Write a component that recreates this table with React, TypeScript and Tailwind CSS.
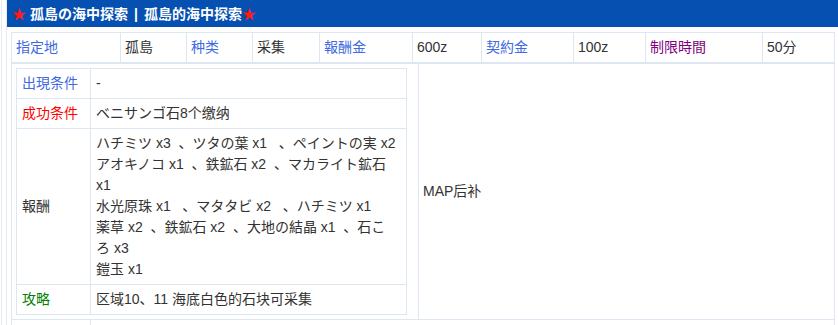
import React from 'react'

const topCells = [
  { label: '指定地', w: 'w-[109px]', tone: 'text-[#4169e1]' },
  { label: '孤島', w: 'w-[66px]', tone: 'text-[#333333]' },
  { label: '种类', w: 'w-[66px]', tone: 'text-[#4169e1]' },
  { label: '采集', w: 'w-[67px]', tone: 'text-[#333333]' },
  { label: '報酬金', w: 'w-[93px]', tone: 'text-[#4169e1]' },
  { label: '600z', w: 'w-[69px]', tone: 'text-[#333333]' },
  { label: '契約金', w: 'w-[92px]', tone: 'text-[#4169e1]' },
  { label: '100z', w: 'w-[72px]', tone: 'text-[#333333]' },
  { label: '制限時間', w: 'w-[117px]', tone: 'text-[#800080]' },
  { label: '50分', w: 'flex-1', tone: 'text-[#333333]' },
]

const rewardLines = [
  'ハチミツ x3  、ツタの葉 x1   、ペイントの実 x2',
  'アオキノコ x1  、鉄鉱石 x2  、マカライト鉱石',
  'x1',
  '水光原珠 x1   、マタタビ x2   、ハチミツ x1',
  '薬草 x2  、鉄鉱石 x2  、大地の結晶 x1  、石こ',
  'ろ x3',
  '鎧玉 x1',
]

const InfoRow = ({
  label,
  tone,
  h,
  children,
}: {
  label: string
  tone: string
  h: string
  children: React.ReactNode
}) => (
  <div className={`flex ${h} border-b border-[#dde7f1]`}>
    <div
      className={`w-[74px] shrink-0 border-r border-[#dde7f1] pl-[5px] flex items-center ${tone}`}
    >
      {label}
    </div>
    <div className="flex-1 pl-[5px] flex flex-col justify-center text-[#333333]">
      {children}
    </div>
  </div>
)

export default function App() {
  return (
    <div className="w-[838px] h-[325px] overflow-hidden bg-white pl-[1px] font-['Liberation_Sans','Noto_Sans_CJK_SC',sans-serif] text-[14px]">
      <div className="h-full border-l border-[#e3ebf3] pl-[4px]">
        <div className="h-full border-l border-[#e3ebf3]">
          {/* title bar */}
          <div className="h-[27px] bg-[#0550b0] flex items-center pl-[5px] text-white font-bold leading-none">
            <span className="text-[#ff1a1a] mr-[4px]">★</span>
            <span>孤島の海中探索</span>
            <span className="px-[6px]">|</span>
            <span>孤島的海中探索</span>
            <span className="text-[#ff1a1a]">★</span>
          </div>

          <div className="pt-[5px] pl-[4px] pr-[3px]">
            <div className="border-l border-r border-[#dde7f1]">
              {/* summary row */}
              <div className="flex h-[31px] border-t border-b border-[#dde7f1]">
                {topCells.map((c, i) => (
                  <div
                    key={i}
                    className={`${c.w} shrink-0 px-[4px] flex items-center ${c.tone} ${
                      i < topCells.length - 1 ? 'border-r border-[#dde7f1]' : ''
                    }`}
                  >
                    {c.label}
                  </div>
                ))}
              </div>

              {/* detail row */}
              <div className="flex h-[257px] border-t border-b border-[#dde7f1]">
                <div className="w-[407px] shrink-0 border-r border-[#dde7f1] pt-[4px] pl-[4px]">
                  <div className="w-[391px] border border-b-0 border-[#dde7f1]">
                    <InfoRow label="出現条件" tone="text-[#4169e1]" h="h-[30px]">
                      <span>-</span>
                    </InfoRow>
                    <InfoRow label="成功条件" tone="text-[#ff0000]" h="h-[30px]">
                      <span>ベニサンゴ石8个缴纳</span>
                    </InfoRow>
                    <InfoRow label="報酬" tone="text-[#333333]" h="h-[156px]">
                      {rewardLines.map((line, i) => (
                        <div key={i} className="leading-[21px] whitespace-pre">
                          {line}
                        </div>
                      ))}
                    </InfoRow>
                    <InfoRow label="攻略" tone="text-[#008000]" h="h-[30px]">
                      <span>区域10、11 海底白色的石块可采集</span>
                    </InfoRow>
                  </div>
                </div>
                <div className="flex-1 pl-[4px] flex items-center text-[#333333]">
                  MAP后补
                </div>
              </div>

              {/* next row, cut off */}
              <div className="flex h-[10px]">
                <div className="w-[79px] shrink-0 border-r border-[#dde7f1]" />
                <div className="flex-1" />
              </div>
            </div>
          </div>
        </div>
      </div>
    </div>
  )
}
